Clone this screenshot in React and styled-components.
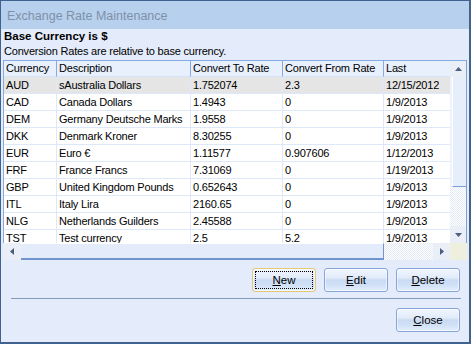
import React from 'react';
import styled, { createGlobalStyle, css } from 'styled-components';

const Global = createGlobalStyle`
  html, body { margin: 0; padding: 0; }
  body {
    width: 471px; height: 344px; overflow: hidden;
    font-family: "Liberation Sans", Arial, sans-serif;
    background: #e4ecfb;
  }
  * { box-sizing: border-box; }
`;

const Window = styled.div`
  width: 471px;
  height: 344px;
  border-style: solid;
  border-color: #41618e;
  border-width: 1px 2px 2px 1px;
  background: #e4ecfb;
  display: flex;
  flex-direction: column;
`;

const TitleBar = styled.div`
  height: 28px;
  flex: none;
  background: #b6d0ee;
  display: flex;
  align-items: center;
  padding-left: 6px;
  padding-top: 2px;
  color: #7f90a8;
  font-size: 12.5px;
`;

const Body = styled.div`
  flex: 1;
  display: flex;
  flex-direction: column;
  padding: 0 1px 0 2px;
`;

const Heading = styled.div`
  height: 15px;
  line-height: 15px;
  padding-left: 1px;
  font-weight: bold;
  font-size: 11.5px;
  color: #000;
`;

const SubText = styled.div`
  height: 14px;
  line-height: 14px;
  margin-bottom: 2px;
  padding-left: 1px;
  font-size: 11px;
  letter-spacing: -0.2px;
  color: #000;
`;

const GridFrame = styled.div`
  width: 464px;
  display: grid;
  grid-template-columns: 447px 17px;
  grid-template-rows: 183px 17px;
`;

const Viewport = styled.div`
  overflow: hidden;
  border-left: 1px solid #86abe2;
  background: #fff;
`;

const COLS = '53px 134px 92px 101px 66px';

const HeaderRow = styled.div`
  display: grid;
  grid-template-columns: ${COLS};
  height: 17px;
  background: #e8f0fd;
  border-top: 1px solid #86abe2;
`;

const HeaderCell = styled.div`
  border-right: 1px solid #86abe2;
  border-bottom: 1px solid #d6e3f6;
  padding-left: 2px;
  line-height: 15px;
  font-size: 11px;
  letter-spacing: -0.2px;
  white-space: nowrap;
  overflow: hidden;
  color: #000;
  &:last-child { border-right: none; }
`;

const Row = styled.div`
  display: grid;
  grid-template-columns: ${COLS};
  height: 17px;
  background: ${p => (p.$selected ? '#e5e5e5' : '#fff')};
`;

const Cell = styled.div`
  border-right: 1px solid #dde8f8;
  border-bottom: 1px solid #dde8f8;
  padding-left: 2px;
  line-height: 16px;
  font-size: 11px;
  letter-spacing: -0.2px;
  white-space: nowrap;
  overflow: hidden;
  color: #000;
  &:last-child { border-right: none; }
`;

const VScroll = styled.div`
  display: flex;
  flex-direction: column;
  border-top: 1px solid #86abe2;
  border-right: 1px solid #7ea1d6;
  background: #eef2f9;
`;

const ArrowBtn = styled.div`
  flex: none;
  display: flex;
  align-items: center;
  justify-content: center;
  background: #e9eef7;
  ${p => p.$v && css`height: ${p.$h || 16}px;`}
  ${p => p.$hz && css`width: ${p.$w || 17}px;`}
`;

const checker = css`
  background-color: #ffffff;
  background-image: repeating-conic-gradient(#e3e9f5 0 25%, #ffffff 0 50%);
  background-size: 2px 2px;
`;

const VThumb = styled.div`
  flex: none;
  height: 110px;
  margin-left: 2px;
  background: #e6eefc;
  border-left: 1px solid #ffffff;
  border-bottom: 1px solid #7a9ed6;
`;

const VTrack = styled.div`
  flex: 1;
  ${checker}
`;

const HScroll = styled.div`
  display: flex;
  background: #eef2f9;
`;

const HThumb = styled.div`
  flex: none;
  width: 363px;
  background: #e4ecfb;
  border-top: 1px solid #ffffff;
  border-right: 1px solid #7094cb;
  border-bottom: 2px solid #7094cb;
`;

const HTrack = styled.div`
  flex: 1;
  ${checker}
`;

const Corner = styled.div`
  background: #eef0dd;
`;

const ButtonRow = styled.div`
  display: flex;
  justify-content: flex-end;
  gap: 8px;
  padding-right: 8px;
  margin-top: ${p => p.$top}px;
`;

const Button = styled.div`
  position: relative;
  width: 64px;
  height: 24px;
  border: 1px solid ${p => (p.$default ? '#e6c772' : '#86a6d8')};
  border-radius: 3px;
  background: linear-gradient(to bottom, #f1f6fe 0%, #e2ecfa 38%, #c9dbf3 52%, #d2e2f7 78%, #e8f0fc 100%);
  display: flex;
  align-items: center;
  justify-content: center;
  font-size: 11.5px;
  color: #000;
  box-shadow: inset 0 0 0 1px rgba(255,255,255,0.55);
  u { text-decoration: underline; text-underline-offset: 1px; }
`;

const FocusRect = styled.div`
  position: absolute;
  inset: 2px;
  border: 1px dotted #000;
`;

const Separator = styled.div`
  height: 1px;
  margin: 6px 7px 0 8px;
  background: #7f9bc0;
`;

const Tri = ({ dir }) => {
  const pts = {
    up: '0,4 7,4 3.5,0',
    down: '0,0 7,0 3.5,4',
    left: '4,0 4,7 0,3.5',
    right: '0,0 0,7 4,3.5',
  }[dir];
  const vertical = dir === 'up' || dir === 'down';
  return (
    <svg width={vertical ? 7 : 4} height={vertical ? 4 : 7} viewBox={vertical ? '0 0 7 4' : '0 0 4 7'}>
      <polygon points={pts} fill="#4b5f80" />
    </svg>
  );
};

const rows = [
  ['AUD', 'sAustralia Dollars', '1.752074', '2.3', '12/15/2012'],
  ['CAD', 'Canada Dollars', '1.4943', '0', '1/9/2013'],
  ['DEM', 'Germany Deutsche Marks', '1.9558', '0', '1/9/2013'],
  ['DKK', 'Denmark Kroner', '8.30255', '0', '1/9/2013'],
  ['EUR', 'Euro €', '1.11577', '0.907606', '1/12/2013'],
  ['FRF', 'France Francs', '7.31069', '0', '1/19/2013'],
  ['GBP', 'United Kingdom Pounds', '0.652643', '0', '1/9/2013'],
  ['ITL', 'Italy Lira', '2160.65', '0', '1/9/2013'],
  ['NLG', 'Netherlands Guilders', '2.45588', '0', '1/9/2013'],
  ['TST', 'Test currency', '2.5', '5.2', '1/9/2013'],
];

const headers = ['Currency', 'Description', 'Convert To Rate', 'Convert From Rate', 'Last'];

const Label = ({ text }) => (
  <span><u>{text[0]}</u>{text.slice(1)}</span>
);

export default function App() {
  return (
    <>
      <Global />
      <Window>
        <TitleBar>Exchange Rate Maintenance</TitleBar>
        <Body>
          <Heading>Base Currency is $</Heading>
          <SubText>Conversion Rates are relative to base currency.</SubText>
          <GridFrame>
            <Viewport>
              <HeaderRow>
                {headers.map(h => <HeaderCell key={h}>{h}</HeaderCell>)}
              </HeaderRow>
              {rows.map((r, i) => (
                <Row key={r[0]} $selected={i === 0}>
                  {r.map((c, j) => <Cell key={j}>{c}</Cell>)}
                </Row>
              ))}
            </Viewport>
            <VScroll>
              <ArrowBtn $v $h={16}><Tri dir="up" /></ArrowBtn>
              <VThumb />
              <VTrack />
              <ArrowBtn $v $h={17}><Tri dir="down" /></ArrowBtn>
            </VScroll>
            <HScroll>
              <ArrowBtn $hz $w={18}><Tri dir="left" /></ArrowBtn>
              <HThumb />
              <HTrack />
              <ArrowBtn $hz $w={17}><Tri dir="right" /></ArrowBtn>
            </HScroll>
            <Corner />
          </GridFrame>
          <ButtonRow $top={8}>
            <Button $default><FocusRect /><Label text="New" /></Button>
            <Button><Label text="Edit" /></Button>
            <Button><Label text="Delete" /></Button>
          </ButtonRow>
          <Separator />
          <ButtonRow $top={9}>
            <Button><Label text="Close" /></Button>
          </ButtonRow>
        </Body>
      </Window>
    </>
  );
}
